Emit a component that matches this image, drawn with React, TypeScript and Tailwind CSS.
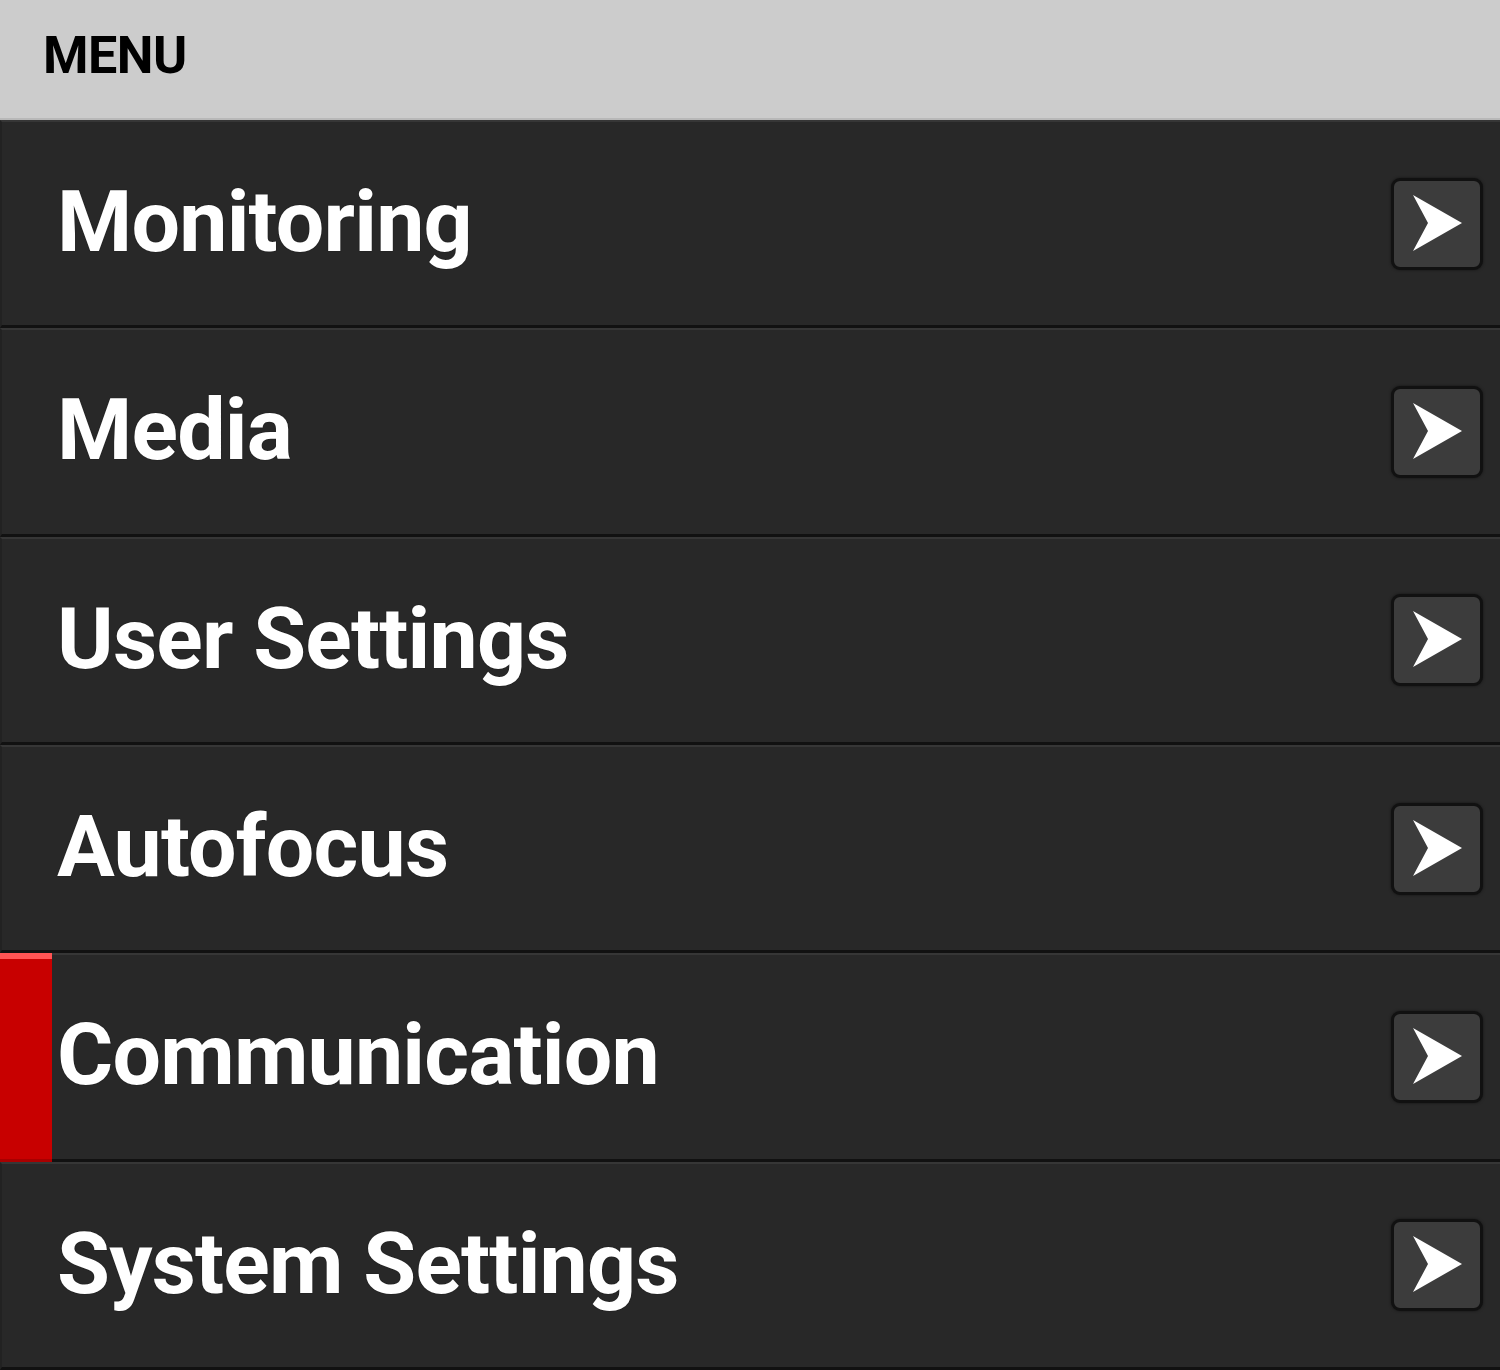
import React from "react";

const items = ["Monitoring", "Media", "User Settings", "Autofocus", "Communication", "System Settings"];

export default function App() {
  return (
    <div className="w-[1500px] h-[1370px] bg-[#282828] flex flex-col" style={{ fontFamily: "Roboto, 'Liberation Sans', sans-serif" }}>
      <div className="h-[120px] bg-[#cccccc] flex items-center pl-[43px] border-b-2 border-[#b8b8b8]">
        <span className="text-[52px] font-bold text-black leading-none tracking-[-0.5px] mt-[-6px]">MENU</span>
      </div>
      <div className="flex-1 flex flex-col">
        {items.map((label) => {
          const active = label === "Communication";
          return (
            <div
              key={label}
              className="relative flex-1 flex items-center bg-[#282828] border-t-2 border-t-[#363636] border-b-[3px] border-b-[#111111] border-l-2 border-l-[#222222]"
            >
              {active && (
                <div className="absolute left-[-2px] top-[-2px] bottom-[-3px] w-[52px] bg-[#c80000] flex flex-col justify-between">
                  <div className="h-[6px] bg-[#ff5454]" />
                  <div className="h-[3px] bg-[#a80000]" />
                </div>
              )}
              <span className="relative pl-[55px] mt-[-3px] text-[86px] font-bold text-white leading-none tracking-[-0.8px] [text-shadow:0_0_1px_rgba(0,0,0,0.9)]">{label}</span>
              <div className="ml-auto mr-[17px] w-[92px] h-[92px] rounded-[9px] border-[3px] border-[#111111] bg-[#3c3c3c] flex items-center justify-center shadow-[0_0_3px_rgba(0,0,0,0.5)]">
                <svg width="86" height="86" viewBox="3 3 86 86" className="block">
                  <polygon points="22,17 71,45 22,73 37,45" fill="#ffffff" />
                </svg>
              </div>
            </div>
          );
        })}
      </div>
    </div>
  );
}
